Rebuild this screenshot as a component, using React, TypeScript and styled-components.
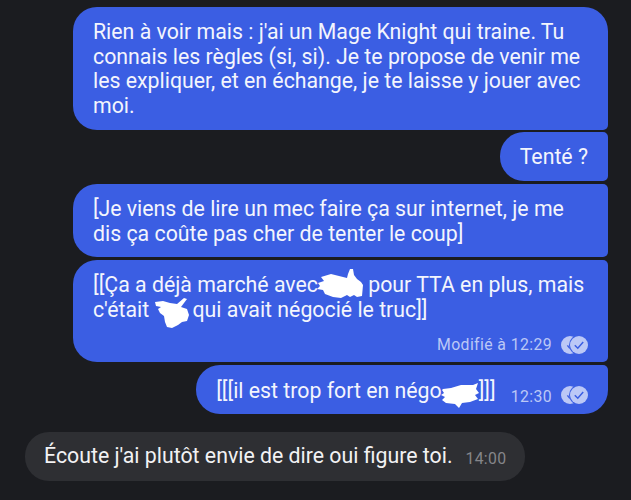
import React from 'react';
import styled, { createGlobalStyle } from 'styled-components';

const GlobalStyle = createGlobalStyle`
  html, body {
    margin: 0;
    height: 100%;
    background: #1b1c20;
  }
`;

const Page = styled.div`
  width: 631px;
  height: 500px;
  box-sizing: border-box;
  padding: 7px 23px 0 25px;
  background: #1b1c20;
  display: flex;
  flex-direction: column;
  gap: 3px;
  overflow: hidden;
  font-family: Roboto, 'Liberation Sans', sans-serif;
  font-size: 21.3px;
  line-height: 24.7px;
  color: #f3f5fd;
`;

const Bubble = styled.div<{ $radius: string; $wide?: boolean; $tuck?: boolean }>`
  box-sizing: border-box;
  align-self: flex-end;
  width: ${(p) => (p.$wide ? '535px' : 'fit-content')};
  margin-top: ${(p) => (p.$tuck ? '-1px' : '0')};
  padding: 13px 20px 11px 20px;
  background: #3b5ee3;
  border-radius: ${(p) => p.$radius};
`;

const Line = styled.div`
  white-space: nowrap;
`;

const InlineRow = styled.div`
  display: flex;
  align-items: flex-end;
  height: 25px;
  white-space: nowrap;
`;

const MetaRow = styled.div`
  display: flex;
  justify-content: flex-end;
  align-items: center;
  margin-top: 13.4px;
  margin-bottom: -2.8px;
  height: 18px;
`;

const Meta = styled.span`
  font-size: 15.8px;
  line-height: 20px;
  letter-spacing: 0.4px;
  color: #bcc8f6;
`;

const InlineMeta = styled(Meta)`
  margin-left: 15px;
  margin-bottom: -3.6px;
`;

const TickWrap = styled.span`
  display: inline-flex;
  margin-left: 9px;
`;

const InlineTicks = styled.span`
  display: inline-flex;
  margin-bottom: -1px;
`;

const Scribble = styled.svg`
  display: inline-block;
  vertical-align: middle;
  overflow: visible;
  fill: #fff;
`;

const BlotOneSvg = styled(Scribble)`
  margin: -8px 0 -3px -1px;
`;

const BlotTwoSvg = styled(Scribble)`
  margin: -8px 3px -12px 0;
`;

const BlotThreeSvg = styled(Scribble)`
  margin: -4px -1px -11px 0;
`;

const Received = styled.div`
  margin-top: 15px;
  align-self: flex-start;
  width: 500px;
  height: 49px;
  box-sizing: border-box;
  padding: 0 19px;
  background: #2e2f33;
  border-radius: 24px;
  display: flex;
  align-items: center;
  white-space: nowrap;
  color: #f2f2f3;
`;

const ReceivedTime = styled.span`
  margin-left: 13px;
  margin-top: 6px;
  font-size: 15.8px;
  letter-spacing: 0.3px;
  color: #85868a;
`;

function Ticks() {
  return (
    <TickWrap>
      <svg width="27" height="18" viewBox="0 0 27 18">
        <circle cx="9" cy="9" r="9" fill="#bcc8f6" />
        <circle cx="18" cy="9" r="10" fill="#3b5ee3" />
        <circle cx="18" cy="9" r="9" fill="#bcc8f6" />
        <path d="M13.8 9.2l3 3 5.4-6.2" fill="none" stroke="#3b5ee3" strokeWidth="1.5" />
        <path d="M6.4 9.4l2.4 3" fill="none" stroke="#3b5ee3" strokeWidth="1.5" />
      </svg>
    </TickWrap>
  );
}

function BlotOne() {
  return (
    <BlotOneSvg width="46" height="30" viewBox="0 0 46 30">
      <path d="M4 8l10-3 8 2 8 2 1-4 2-5 3 0 1 6 3 4 4 3 2 3-1 11-5 1-3-2-4 2-3-2-6 3-8-1-8-3-2-4-6-1 3-3-2-3 6-2z" />
    </BlotOneSvg>
  );
}

function BlotTwo() {
  return (
    <BlotTwoSvg width="35" height="30" viewBox="0 0 35 30">
      <path d="M1 4l8-1 7 2 7 1 7-6 3 1-6 8 6 2 2 6-2 6-5 1-4 3-6 3-5-1-2-5-1-6-4-3-2-4 3-2-5-1z" />
    </BlotTwoSvg>
  );
}

function BlotThree() {
  return (
    <BlotThreeSvg width="38" height="26" viewBox="0 0 38 26">
      <path d="M1 7l8-1 10-3 12 0 5-2-2 6 3 4-4 2 3 4-8 3-8 1-3 5-4-4-9-1-4-3 3-3-4-2 3-2-2-3z" />
    </BlotThreeSvg>
  );
}

function App() {
  return (
    <Page>
      <GlobalStyle />
      <Bubble $wide $radius="24px 24px 5px 24px">
        <Line>Rien à voir mais : j'ai un Mage Knight qui traine. Tu</Line>
        <Line>connais les règles (si, si). Je te propose de venir me</Line>
        <Line>les expliquer, et en échange, je te laisse y jouer avec</Line>
        <Line>moi.</Line>
      </Bubble>
      <Bubble $tuck $radius="24px 5px 5px 24px">
        <InlineRow>Tenté ?</InlineRow>
      </Bubble>
      <Bubble $wide $radius="24px 5px 5px 24px">
        <Line>[Je viens de lire un mec faire ça sur internet, je me</Line>
        <Line>dis ça coûte pas cher de tenter le coup]</Line>
      </Bubble>
      <Bubble $wide $radius="24px 5px 5px 24px">
        <Line>
          [[Ça a déjà marché avec
          <BlotOne /> pour TTA en plus, mais
        </Line>
        <Line>
          c'était <BlotTwo />
          qui avait négocié le truc]]
        </Line>
        <MetaRow>
          <Meta>Modifié à 12:29</Meta>
          <Ticks />
        </MetaRow>
      </Bubble>
      <Bubble $radius="24px 5px 24px 24px">
        <InlineRow>
          <span>
            [[[il est trop fort en négo
            <BlotThree />
            ]]]
          </span>
          <InlineMeta>12:30</InlineMeta>
          <InlineTicks>
            <Ticks />
          </InlineTicks>
        </InlineRow>
      </Bubble>
      <Received>
        Écoute j'ai plutôt envie de dire oui figure toi.
        <ReceivedTime>14:00</ReceivedTime>
      </Received>
    </Page>
  );
}

export default App;
